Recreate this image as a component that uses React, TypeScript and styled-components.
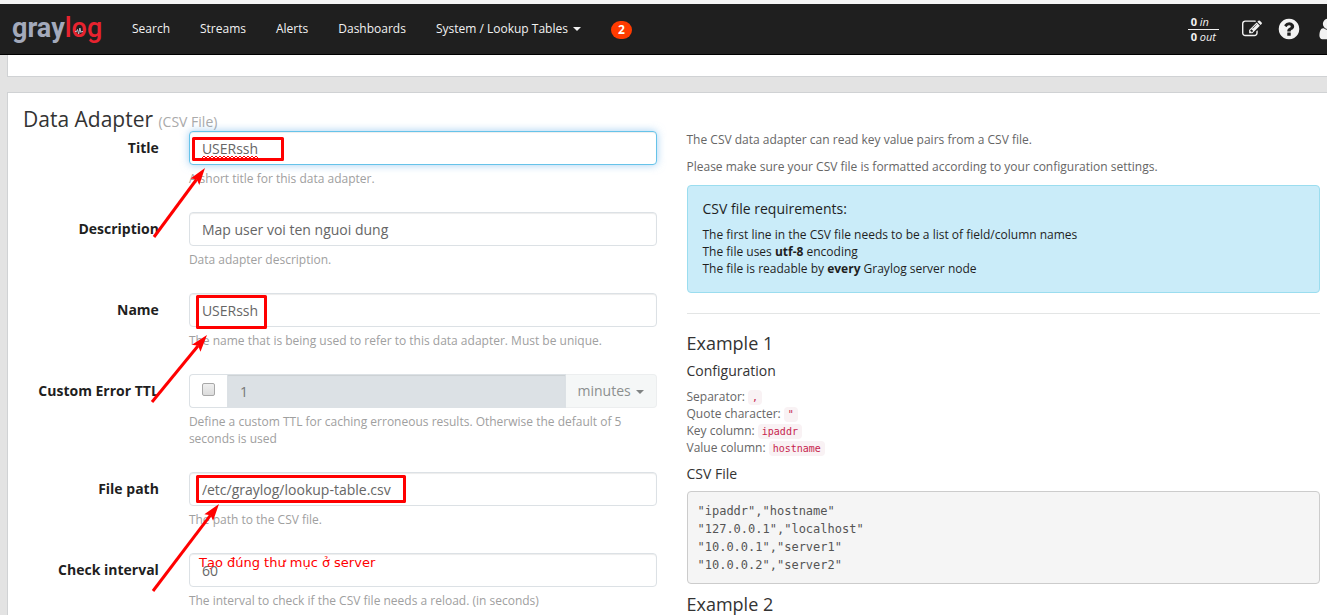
import React from 'react';
import styled, { createGlobalStyle, css } from 'styled-components';

const sans = '"Open Sans", "Noto Sans", sans-serif';
const mono = '"DejaVu Sans Mono", "Liberation Mono", monospace';

const GlobalStyle = createGlobalStyle`
  *, *::before, *::after { box-sizing: border-box; }
  body {
    margin: 0;
    background: #e3e3e3;
    color: #666;
    font: 12px/17px ${sans};
  }
  input, select, button { font-family: ${sans}; }
`;

const Page = styled.div`
  position: relative;
  height: 100vh;
  overflow: hidden;
`;

const Navbar = styled.header`
  display: flex;
  align-items: center;
  height: 55px;
  padding-left: 12px;
  overflow: hidden;
  background: #1f1f1f;
  border-top: 4px solid #f4f4f4;
  border-bottom: 1px solid #000;
`;

const Brand = styled.a`
  display: flex;
  width: 105px;
  padding-bottom: 2px;
  font: 700 27px/32px Roboto, sans-serif;
  color: #a3a9bb;
  text-decoration: none;
`;

const BrandAccent = styled.span`
  font-weight: 500;
  color: #e8232f;
`;

const Ring = styled.span`
  position: relative;
`;

const Pulse = styled.svg`
  position: absolute;
  inset: 5px 0 0;
  margin: auto;
`;

const Menu = styled.nav`
  display: flex;
  align-items: center;
`;

const menuItem = css`
  padding: 0 15px;
  border: 0;
  background: none;
  color: #f2f2f2;
  font-size: 12px;
  line-height: 18px;
  text-decoration: none;
`;

const MenuLink = styled.a`
  ${menuItem}
`;

const MenuButton = styled.button`
  ${menuItem}
  display: flex;
  align-items: center;
  gap: 5px;
`;

const Caret = styled.span`
  border: 4px solid transparent;
  border-top-color: currentColor;
  border-bottom: 0;
`;

const Badge = styled.a`
  margin: 2px 0 0 15px;
  padding: 0 7px;
  border-radius: 9px;
  background: #ff3b00;
  color: #fff;
  font-weight: 700;
  line-height: 18px;
  text-decoration: none;
`;

const Tools = styled.div`
  display: flex;
  align-items: center;
  gap: 15px;
  margin: 0 -13px 0 auto;
  color: #f2f2f2;
`;

const Throughput = styled.div`
  margin-right: 8px;
  font-size: 11px;
  line-height: 14px;
  white-space: nowrap;

  div { padding: 0 3px; }
  div + div { border-top: 1px solid #f2f2f2; }
`;

const IconLink = styled.a`
  display: flex;
  flex: none;
  color: inherit;
`;

const Panel = styled.section`
  margin: 0 0 15px 7px;
  padding: 15px 7px 15px 15px;
  background: #fff;
  border: 1px solid #d0d2d4;
  border-right: 0;
`;

const PreviousPanel = styled(Panel)`
  height: 22px;
  padding: 0;
  border-top: 0;
`;

const PanelTitle = styled.h2`
  margin: 0;
  color: #333;
  font-size: 21px;
  font-weight: 400;
  line-height: 23px;

  small { color: #aaa; font-size: 14px; line-height: 14px; }
`;

const Columns = styled.div`
  display: grid;
  grid-template-columns: 1fr 1fr;
  gap: 30px;
`;

const FormRow = styled.div`
  display: flex;
  margin: 0 -15px 15px;
`;

const Label = styled.label`
  flex: 0 0 25%;
  padding: 7px 15px 0;
  color: #1f1f1f;
  font-size: 14px;
  font-weight: 700;
  line-height: 20px;
  text-align: right;
  white-space: nowrap;
`;

const Field = styled.div`
  flex: 0 0 75%;
  min-width: 0;
  padding: 0 15px;
`;

const Input = styled.input<{ $active?: boolean }>`
  display: block;
  width: 100%;
  height: 34px;
  padding: 6px 12px;
  border: 1px solid ${p => (p.$active ? '#66c3e9' : '#dce1e5')};
  border-radius: 4px;
  background: #fff;
  box-shadow: inset 0 1px 1px rgba(0, 0, 0, 0.075)${p => (p.$active ? ', 0 0 8px rgba(102, 175, 233, 0.6)' : '')};
  color: #666;
  font-size: 14px;
  outline: 0;
`;

const Help = styled.p`
  margin: 5px 0 10px;
  color: #a0a0a0;
`;

const InputGroup = styled.div`
  display: flex;
`;

const Addon = styled.span`
  flex: 0 0 38px;
  padding: 8px 12px;
  border: 1px solid #dce1e5;
  border-right: 0;
  border-radius: 4px 0 0 4px;
`;

const Checkbox = styled.input`
  display: block;
  appearance: none;
  width: 13px;
  height: 13px;
  margin: 0;
  border: 1px solid #a8a8a8;
  border-radius: 2px;
  background: linear-gradient(#efefef, #dcdcdc);
`;

const AmountInput = styled(Input)`
  flex: 1;
  border-radius: 0;
  background: #dce1e5;
  color: #777;
`;

const UnitBox = styled.div`
  position: relative;
  flex: 0 0 91px;
  color: #808383;

  ${Caret} {
    position: absolute;
    top: 16px;
    right: 13px;
  }
`;

const UnitSelect = styled.select`
  appearance: none;
  width: 100%;
  height: 34px;
  padding: 0 12px 2px;
  border: 1px solid #eceeef;
  border-left: 0;
  border-radius: 0 4px 4px 0;
  background: #f5f7f7;
  color: #8c8f8f;
  font-size: 14px;
  opacity: 1;
`;

const Paragraph = styled.p`
  margin: 0 0 10px;
`;

const Notice = styled.div`
  padding: 15px;
  border: 1px solid #9bddef;
  border-radius: 4px;
  background: #caecf9;
  color: #1f1f1f;
`;

const Divider = styled.hr`
  margin: 20px 0 19px;
  border: 0;
  border-top: 1px solid #e3e5e5;
`;

const ExampleTitle = styled.h3`
  margin: 0 0 10px;
  color: #333;
  font-size: 18px;
  font-weight: 400;
  line-height: 20px;
`;

const SubTitle = styled.h4`
  margin: 0 0 10px;
  color: inherit;
  font-size: 14px;
  font-weight: 400;
  line-height: 15px;
`;

const Dark = styled.div`
  color: #333;
`;

const Code = styled.code`
  padding: 2px 4px;
  border-radius: 4px;
  background: #f9f2f4;
  color: #c7254e;
  font-family: ${mono};
  font-size: 10px;
  line-height: 12px;
`;

const Pre = styled.pre`
  margin: 0 0 10px;
  padding: 10px 10px 9px;
  border: 1px solid #ccc;
  border-radius: 4px;
  background: #f5f5f5;
  color: #555;
  font: 12px/18px ${mono};
`;

const Markup = styled.svg`
  position: absolute;
  top: 0;
  left: 0;
  pointer-events: none;
`;

const Note = styled.span`
  position: absolute;
  top: 554px;
  left: 199px;
  color: #f00;
  font: 13px/18px "DejaVu Sans", sans-serif;
  white-space: nowrap;
  pointer-events: none;
`;

const icons = {
  edit: 'M888 1184l116-116-152-152-116 116v56h96v96h56zm440-720q-16-16-33 1l-350 350q-17 17-1 33t33-1l350-350q17-17 1-33zm80 594v190q0 119-84.5 203.5t-203.5 84.5h-832q-119 0-203.5-84.5t-84.5-203.5v-832q0-119 84.5-203.5t203.5-84.5h832q63 0 117 25 15 7 18 23 3 17-9 29l-49 49q-14 14-32 8-23-6-45-6h-832q-66 0-113 47t-47 113v832q0 66 47 113t113 47h832q66 0 113-47t47-113v-126q0-13 9-22l64-64q15-15 35-7t20 29zm-96-738l288 288-672 672h-288v-288zm444 132l-92 92-288-288 92-92q28-28 68-28t68 28l152 152q28 28 28 68t-28 68z',
  help: 'M1024 1376v-192q0-14-9-23t-23-9h-192q-14 0-23 9t-9 23v192q0 14 9 23t23 9h192q14 0 23-9t9-23zm256-672q0-88-55.5-163t-138.5-116-170-41q-243 0-371 213-15 24 8 42l132 100q7 6 19 6 16 0 25-12 53-68 86-92 34-24 86-24 48 0 85.5 26t37.5 59q0 38-20 61t-68 45q-63 28-115.5 86.5t-52.5 125.5v36q0 14 9 23t23 9h192q14 0 23-9t9-23q0-19 21.5-49.5t54.5-49.5q32-18 49-28.5t46-35 44.5-48 28-60.5 12.5-81zm384 192q0 209-103 385.5t-279.5 279.5-385.5 103-385.5-103-279.5-279.5-103-385.5 103-385.5 279.5-279.5 385.5-103 385.5 103 279.5 279.5 103 385.5z',
  user: 'M1536 1399q0 109-62.5 187t-150.5 78h-854q-88 0-150.5-78t-62.5-187q0-85 8.5-160.5t31.5-152 58.5-131 94-89 134.5-34.5q131 128 313 128t313-128q76 0 134.5 34.5t94 89 58.5 131 31.5 152 8.5 160.5zm-256-887q0 159-112.5 271.5t-271.5 112.5-271.5-112.5-112.5-271.5 112.5-271.5 271.5-112.5 271.5 112.5 112.5 271.5z',
};

function ToolIcon({ name, size, label }: { name: keyof typeof icons; size: number; label: string }) {
  return (
    <IconLink href="#" aria-label={label}>
      <svg width={size} height={size} viewBox="0 0 1792 1792" fill="currentColor">
        <path d={icons[name]} />
      </svg>
    </IconLink>
  );
}

interface TextRowProps {
  id: string;
  label: string;
  value: string;
  help: string;
  active?: boolean;
}

function TextRow({ id, label, value, help, active }: TextRowProps) {
  return (
    <FormRow>
      <Label htmlFor={id}>{label}</Label>
      <Field>
        <Input id={id} type="text" defaultValue={value} $active={active} spellCheck={false} />
        <Help>{help}</Help>
      </Field>
    </FormRow>
  );
}

const arrows = [
  { from: [154, 237], to: [205, 168] },
  { from: [152, 402], to: [207, 335] },
  { from: [153, 591], to: [219, 504] },
];

const frames = [
  { x: 192, y: 137, w: 92, h: 24 },
  { x: 196, y: 295, w: 71, h: 34 },
  { x: 196, y: 475, w: 210, h: 28 },
];

function Arrow({ from, to }: { from: number[]; to: number[] }) {
  const dx = to[0] - from[0];
  const dy = to[1] - from[1];
  const length = Math.hypot(dx, dy);
  const ux = dx / length;
  const uy = dy / length;
  const bx = to[0] - ux * 17;
  const by = to[1] - uy * 17;
  const nx = to[0] - ux * 14;
  const ny = to[1] - uy * 14;
  return (
    <>
      <line x1={from[0]} y1={from[1]} x2={nx} y2={ny} stroke="#f00" strokeWidth="3" />
      <polygon
        fill="#f00"
        points={`${to[0]},${to[1]} ${bx - uy * 5.5},${by + ux * 5.5} ${nx},${ny} ${bx + uy * 5.5},${by - ux * 5.5}`}
      />
    </>
  );
}

function Annotations() {
  const wave = Array.from({ length: 29 }, (_, i) => `${202 + i * 2},${i % 2 ? 156 : 158}`).join(' ');
  return (
    <>
      <Markup width="420" height="615" aria-hidden="true">
        <polyline points={wave} fill="none" stroke="#f00" strokeWidth="1" />
        {frames.map(f => (
          <rect
            key={f.y}
            x={f.x + 1.5}
            y={f.y + 1.5}
            width={f.w - 3}
            height={f.h - 3}
            fill="none"
            stroke="#f00"
            strokeWidth="3"
            strokeLinejoin="round"
          />
        ))}
        {arrows.map(a => (
          <Arrow key={a.from[1]} {...a} />
        ))}
      </Markup>
      <Note>Tạo đúng thư mục ở server</Note>
    </>
  );
}

export default function App() {
  return (
    <Page>
      <GlobalStyle />
      <Navbar>
        <Brand href="#">
          gray
          <BrandAccent>
            l
            <Ring>
              o
              <Pulse width="8" height="8" viewBox="0 0 8 8" fill="none" stroke="#b9bdcb" strokeWidth="1">
                <path d="M0 4.5h1.5l1-2 1.2 4.5 1.2-6 1 4.5 .6-1H8" />
              </Pulse>
            </Ring>
            g
          </BrandAccent>
        </Brand>
        <Menu>
          <MenuLink href="#">Search</MenuLink>
          <MenuLink href="#">Streams</MenuLink>
          <MenuLink href="#">Alerts</MenuLink>
          <MenuLink href="#">Dashboards</MenuLink>
          <MenuButton type="button" aria-haspopup="menu">
            System / Lookup Tables <Caret />
          </MenuButton>
          <Badge href="#">2</Badge>
        </Menu>
        <Tools>
          <Throughput>
            <div><strong>0</strong> <em>in</em></div>
            <div><strong>0</strong> <em>out</em></div>
          </Throughput>
          <ToolIcon name="edit" size={20} label="Edit" />
          <ToolIcon name="help" size={24} label="Help" />
          <ToolIcon name="user" size={24} label="User" />
        </Tools>
      </Navbar>

      <main>
        <PreviousPanel />
        <Panel>
          <PanelTitle>
            Data Adapter <small>(CSV File)</small>
          </PanelTitle>
          <Columns>
            <form>
              <TextRow id="title" label="Title" value="USERssh" help="A short title for this data adapter." active />
              <TextRow id="description" label="Description" value="Map user voi ten nguoi dung" help="Data adapter description." />
              <TextRow id="name" label="Name" value="USERssh" help="The name that is being used to refer to this data adapter. Must be unique." />
              <FormRow>
                <Label htmlFor="ttl">Custom Error TTL</Label>
                <Field>
                  <InputGroup>
                    <Addon>
                      <Checkbox type="checkbox" aria-label="Enable custom error TTL" />
                    </Addon>
                    <AmountInput id="ttl" type="text" defaultValue="1" disabled />
                    <UnitBox>
                      <UnitSelect aria-label="TTL unit" disabled>
                        <option>minutes</option>
                      </UnitSelect>
                      <Caret />
                    </UnitBox>
                  </InputGroup>
                  <Help>Define a custom TTL for caching erroneous results. Otherwise the default of 5 seconds is used</Help>
                </Field>
              </FormRow>
              <TextRow id="path" label="File path" value="/etc/graylog/lookup-table.csv" help="The path to the CSV file." />
              <TextRow id="interval" label="Check interval" value="60" help="The interval to check if the CSV file needs a reload. (in seconds)" />
            </form>

            <div>
              <Paragraph>The CSV data adapter can read key value pairs from a CSV file.</Paragraph>
              <Paragraph>Please make sure your CSV file is formatted according to your configuration settings.</Paragraph>
              <Notice>
                <SubTitle>CSV file requirements:</SubTitle>
                <div>The first line in the CSV file needs to be a list of field/column names</div>
                <div>The file uses <strong>utf-8</strong> encoding</div>
                <div>The file is readable by <strong>every</strong> Graylog server node</div>
              </Notice>
              <Divider />
              <ExampleTitle>Example 1</ExampleTitle>
              <Dark><SubTitle>Configuration</SubTitle></Dark>
              <Paragraph>
                Separator: <Code>,</Code><br />
                Quote character: <Code>"</Code><br />
                Key column: <Code>ipaddr</Code><br />
                Value column: <Code>hostname</Code>
              </Paragraph>
              <Dark><SubTitle>CSV File</SubTitle></Dark>
              <Pre>{`"ipaddr","hostname"
"127.0.0.1","localhost"
"10.0.0.1","server1"
"10.0.0.2","server2"`}</Pre>
              <ExampleTitle>Example 2</ExampleTitle>
            </div>
          </Columns>
        </Panel>
      </main>
      <Annotations />
    </Page>
  );
}
